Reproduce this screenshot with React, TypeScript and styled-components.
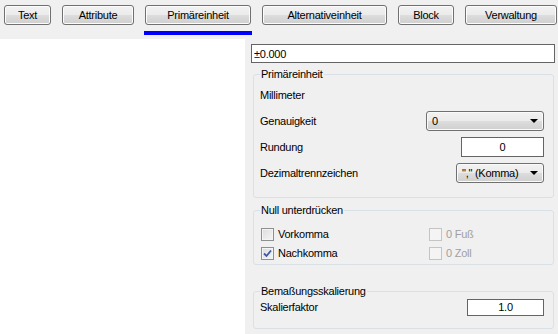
import styled, { createGlobalStyle } from "styled-components"

const GlobalStyle = createGlobalStyle`
    html, body {
        margin: 0;
        padding: 0;
        background: #f0f0f0;
        font-family: "Liberation Sans", Arial, sans-serif;
        font-size: 11px;
        letter-spacing: -0.25px;
        color: #000;
    }
`

const Page = styled.div`
    width: 558px;
    height: 334px;
    display: flex;
    flex-direction: column;
    overflow: hidden;
`

const TabBar = styled.div`
    display: flex;
    gap: 11px;
    padding: 5px 0 0 4px;
    height: 39px;
    box-sizing: border-box;
`

const TabSlot = styled.div`
    display: flex;
    flex-direction: column;
    align-items: stretch;
`

const TabButton = styled.button<{ $w: number }>`
    width: ${p => p.$w}px;
    height: 20px;
    padding: 0;
    border: 1px solid #707070;
    border-radius: 3px;
    background: linear-gradient(#f2f2f2 0%, #ebebeb 50%, #dddddd 51%, #cfcfcf 100%);
    font-family: inherit;
    font-size: 11px;
    letter-spacing: inherit;
    color: #000;
    box-shadow: inset 0 0 0 1px #fcfcfc;
`

const ActiveBar = styled.div`
    height: 4px;
    margin: 6px -1px 0 -1px;
    background: #0000ff;
`

const Body = styled.div`
    flex: 1;
    display: flex;
`

const Canvas = styled.div`
    width: 245px;
    background: #ffffff;
`

const Side = styled.div`
    flex: 1;
    display: flex;
    flex-direction: column;
    padding: 5px 3px 0 6px;
`

const Preview = styled.div`
    height: 19px;
    box-sizing: border-box;
    border: 1px solid #646464;
    background: #fff;
    padding: 2px 2px 0;
    line-height: 14px;
`

const Group = styled.fieldset<{ $top: number; $pt: number; $pb: number }>`
    margin: ${p => p.$top}px 1px 0 2px;
    border: 1px solid #d9e1e6;
    border-radius: 3px;
    padding: ${p => p.$pt}px 9px ${p => p.$pb}px 6px;
    min-width: 0;
`

const Legend = styled.legend`
    padding: 0 1px;
    line-height: 13px;
`

const Rows = styled.div`
    display: flex;
    flex-direction: column;
    gap: 6px;
`

const Row = styled.div<{ $h?: number }>`
    height: ${p => p.$h ?? 20}px;
    display: flex;
    align-items: center;
    justify-content: space-between;
`

const Combo = styled.div<{ $w: number }>`
    width: ${p => p.$w}px;
    height: 20px;
    box-sizing: border-box;
    border: 1px solid #707070;
    border-radius: 3px;
    background: linear-gradient(#f2f2f2 0%, #ebebeb 50%, #dddddd 51%, #cfcfcf 100%);
    box-shadow: inset 0 0 0 1px #fafafa;
    display: flex;
    align-items: center;
    justify-content: space-between;
    padding: 0 5px 0 5px;
`

const Arrow = styled.span`
    width: 0;
    height: 0;
    border-left: 4px solid transparent;
    border-right: 4px solid transparent;
    border-top: 4px solid #000;
`

const NumBox = styled.div<{ $w: number; $h: number }>`
    width: ${p => p.$w}px;
    height: ${p => p.$h}px;
    box-sizing: border-box;
    border: 1px solid #646464;
    background: #fff;
    display: flex;
    align-items: center;
    justify-content: center;
`

const CheckGrid = styled.div`
    display: grid;
    grid-template-columns: 168px 1fr;
    row-gap: 1px;
    padding-left: 1px;
`

const CheckItem = styled.label<{ $disabled?: boolean }>`
    height: 18px;
    display: flex;
    align-items: center;
    gap: 4px;
    color: ${p => (p.$disabled ? "#a0a0a0" : "#000")};
`

const Box = styled.span<{ $disabled?: boolean }>`
    width: 13px;
    height: 13px;
    box-sizing: border-box;
    border: 1px solid ${p => (p.$disabled ? "#c4c4c4" : "#8e8f8f")};
    background: ${p =>
        p.$disabled ? "#f4f4f4" : "linear-gradient(135deg, #dcdcdc, #f6f6f6)"};
    box-shadow: inset 0 0 0 1px #f4f4f4;
    display: flex;
    align-items: center;
    justify-content: center;
`

function Check({ label, checked, disabled }: { label: string; checked?: boolean; disabled?: boolean }) {
    return (
        <CheckItem $disabled={disabled}>
            <Box $disabled={disabled}>
                {checked && (
                    <svg width="9" height="9" viewBox="0 0 9 9">
                        <path d="M1 4.5 L3.5 7 L8 1.5" fill="none" stroke="#3d59a8" strokeWidth="1.8" />
                    </svg>
                )}
            </Box>
            {label}
        </CheckItem>
    )
}

const tabs = [
    { label: "Text", w: 47 },
    { label: "Attribute", w: 72 },
    { label: "Primäreinheit", w: 106, active: true },
    { label: "Alternativeinheit", w: 125 },
    { label: "Block", w: 56 },
    { label: "Verwaltung", w: 92 },
]

export default function App() {
    return (
        <Page>
            <GlobalStyle />
            <TabBar>
                {tabs.map(t => (
                    <TabSlot key={t.label}>
                        <TabButton $w={t.w}>{t.label}</TabButton>
                        {t.active && <ActiveBar />}
                    </TabSlot>
                ))}
            </TabBar>
            <Body>
                <Canvas />
                <Side>
                    <Preview>±0.000</Preview>
                    <Group $top={5} $pt={4} $pb={14}>
                        <Legend>Primäreinheit</Legend>
                        <Rows>
                            <Row>Millimeter</Row>
                            <Row>
                                Genauigkeit
                                <Combo $w={118}>
                                    0
                                    <Arrow />
                                </Combo>
                            </Row>
                            <Row>
                                Rundung
                                <NumBox $w={83} $h={20}>0</NumBox>
                            </Row>
                            <Row>
                                Dezimaltrennzeichen
                                <Combo $w={88}>
                                    "," (Komma)
                                    <Arrow />
                                </Combo>
                            </Row>
                        </Rows>
                    </Group>
                    <Group $top={6} $pt={8} $pb={2}>
                        <Legend>Null unterdrücken</Legend>
                        <CheckGrid>
                            <Check label="Vorkomma" />
                            <Check label="0 Fuß" disabled />
                            <Check label="Nachkomma" checked />
                            <Check label="0 Zoll" disabled />
                        </CheckGrid>
                    </Group>
                    <Group $top={20} $pt={0} $pb={12}>
                        <Legend>Bemaßungsskalierung</Legend>
                        <Row $h={18}>
                            Skalierfaktor
                            <NumBox $w={77} $h={17}>1.0</NumBox>
                        </Row>
                    </Group>
                </Side>
            </Body>
        </Page>
    )
}
